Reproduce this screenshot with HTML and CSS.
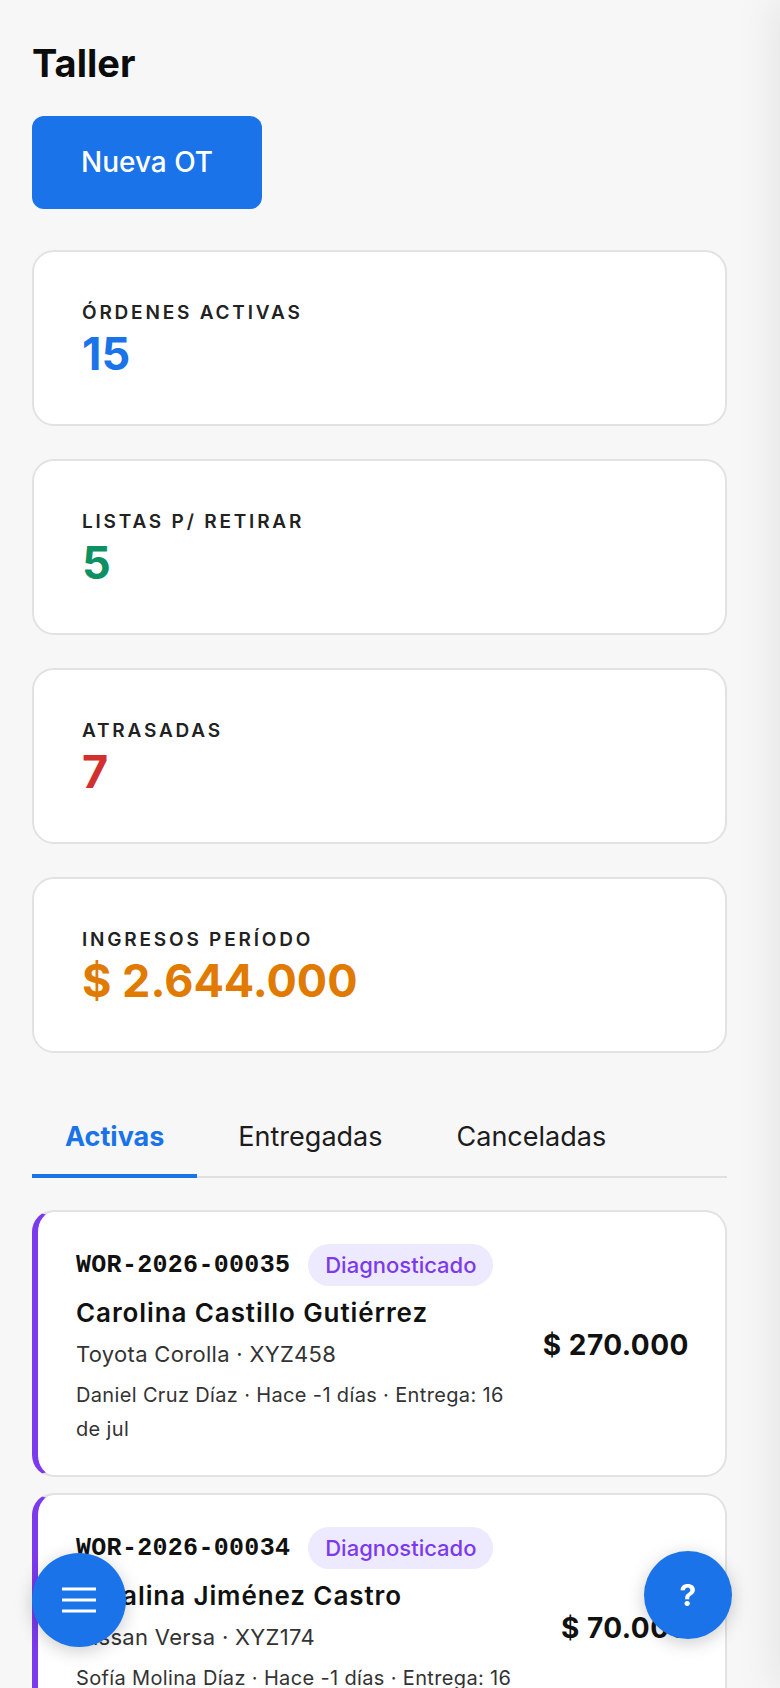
FILE: index.html
```html
<!DOCTYPE html>
<html lang="es">
<head>
  <meta charset="utf-8">
  <title>Taller</title>
  <link rel="stylesheet" href="styles.css">
</head>
<body>
  <main class="page">
    <h1 class="page-title">Taller</h1>
    <button class="btn-primary">Nueva OT</button>

    <section class="stats">
      <div class="stat">
        <div class="stat-label">ÓRDENES ACTIVAS</div>
        <div class="stat-value blue">15</div>
      </div>
      <div class="stat">
        <div class="stat-label">LISTAS P/ RETIRAR</div>
        <div class="stat-value green">5</div>
      </div>
      <div class="stat">
        <div class="stat-label">ATRASADAS</div>
        <div class="stat-value red">7</div>
      </div>
      <div class="stat">
        <div class="stat-label">INGRESOS PERÍODO</div>
        <div class="stat-value orange">$ 2.644.000</div>
      </div>
    </section>

    <nav class="tabs">
      <button class="tab active">Activas</button>
      <button class="tab">Entregadas</button>
      <button class="tab">Canceladas</button>
    </nav>

    <section class="orders">
      <div class="order">
        <div class="order-main">
          <div class="order-head">
            <span class="order-code">WOR-2026-00035</span>
            <span class="badge">Diagnosticado</span>
          </div>
          <div class="order-client">Carolina Castillo Gutiérrez</div>
          <div class="order-vehicle">Toyota Corolla · XYZ458</div>
          <div class="order-meta">Daniel Cruz Díaz · Hace -1 días · Entrega: 16 de jul</div>
        </div>
        <div class="order-total">$ 270.000</div>
      </div>
      <div class="order">
        <div class="order-main">
          <div class="order-head">
            <span class="order-code">WOR-2026-00034</span>
            <span class="badge">Diagnosticado</span>
          </div>
          <div class="order-client">Catalina Jiménez Castro</div>
          <div class="order-vehicle">Nissan Versa · XYZ174</div>
          <div class="order-meta">Sofía Molina Díaz · Hace -1 días · Entrega: 16 de jul</div>
        </div>
        <div class="order-total">$ 70.000</div>
      </div>
    </section>
  </main>

  <button class="fab fab-menu" aria-label="Menú">
    <svg width="34" height="26" viewBox="0 0 34 26">
      <path d="M0 2h34M0 13h34M0 24h34" stroke="#fff" stroke-width="3.2" fill="none"/>
    </svg>
  </button>
  <button class="fab fab-help" aria-label="Ayuda">?</button>
  <div class="drawer"></div>
</body>
</html>
```

FILE: styles.css
```css
* { margin: 0; padding: 0; box-sizing: border-box; }

body {
  font-family: Inter, Roboto, "Liberation Sans", sans-serif;
  background-color: #f7f7f7;
  color: #111;
  overflow: hidden;
}

.page {
  width: 727px;
  padding: 39px 0 0 32px;
}

.page-title {
  font-size: 38px;
  line-height: 48px;
  font-weight: 700;
  color: #0c0c0c;
}

.btn-primary {
  margin-top: 29px;
  display: block;
  font-family: inherit;
  font-size: 28px;
  line-height: 33px;
  font-weight: 500;
  color: #fff;
  background-color: #1a73e8;
  border: none;
  border-radius: 12px;
  padding: 30px 49px;
  cursor: pointer;
}

.stats {
  margin-top: 41px;
  display: flex;
  flex-direction: column;
  gap: 33px;
}

.stat {
  background-color: #fff;
  border: 2px solid #e2e2e2;
  border-radius: 22px;
  padding: 47px 48px 43px;
}

.stat-label {
  font-size: 19px;
  line-height: 27px;
  font-weight: 600;
  letter-spacing: 2.8px;
  color: #222;
}

.stat-value {
  font-size: 45px;
  line-height: 55px;
  font-weight: 700;
}
.blue { color: #1a73e8; }
.green { color: #0d9163; }
.red { color: #d32f2f; }
.orange { color: #e07a00; }

.tabs {
  margin-top: 48px;
  display: flex;
  gap: 8px;
  border-bottom: 2px solid #e0e0e0;
}

.tab {
  font-family: inherit;
  font-size: 27px;
  line-height: 32px;
  font-weight: 400;
  color: #1c1c1c;
  background: none;
  border: none;
  border-bottom: 4px solid transparent;
  margin-bottom: -2px;
  padding: 20px 33px 21px;
  cursor: pointer;
}
.tab.active {
  color: #1a73e8;
  font-weight: 700;
  border-bottom-color: #1a73e8;
}

.orders {
  margin-top: 32px;
  display: flex;
  flex-direction: column;
  gap: 16px;
}

.order {
  display: flex;
  align-items: center;
  gap: 24px;
  background-color: #fff;
  border: 2px solid #e2e2e2;
  border-left: 6px solid #7c3aed;
  border-radius: 22px;
  padding: 32px 36px 29px 38px;
}

.order-main {
  flex: 1;
  min-width: 0;
}

.order-head {
  display: flex;
  align-items: center;
  gap: 18px;
}

.order-code {
  font-family: "Liberation Mono", "DejaVu Sans Mono", monospace;
  font-size: 25px;
  font-weight: 700;
  letter-spacing: 0.3px;
  color: #111;
}

.badge {
  font-size: 22px;
  line-height: 32px;
  font-weight: 500;
  color: #7c3aed;
  background-color: #ede9fe;
  border-radius: 21px;
  padding: 5px 17px;
}

.order-client {
  margin-top: 11px;
  font-size: 26px;
  line-height: 32px;
  font-weight: 600;
  letter-spacing: 0.9px;
  color: #111;
}

.order-vehicle {
  margin-top: 10px;
  font-size: 22px;
  line-height: 31px;
  letter-spacing: 0.3px;
  color: #333;
}

.order-meta {
  margin-top: 8px;
  font-size: 20px;
  line-height: 34px;
  letter-spacing: 0.35px;
  color: #333;
}

.order-total {
  font-size: 28px;
  font-weight: 700;
  letter-spacing: 0.5px;
  color: #111;
  white-space: nowrap;
}

.fab {
  position: fixed;
  display: flex;
  align-items: center;
  justify-content: center;
  border: none;
  border-radius: 50%;
  background-color: #1a73e8;
  color: #fff;
  box-shadow: 0 4px 18px rgba(0, 0, 0, 0.2);
  cursor: pointer;
}
.fab-menu {
  left: 32px;
  bottom: 41px;
  width: 94px;
  height: 94px;
}
.fab-help {
  right: 48px;
  bottom: 49px;
  width: 88px;
  height: 88px;
  font-family: inherit;
  font-size: 30px;
  font-weight: 700;
}

.drawer {
  position: fixed;
  top: 0;
  left: 100%;
  width: 320px;
  height: 100%;
  background-color: #fff;
  box-shadow: 0 0 44px rgba(0, 0, 0, 0.1);
}
```
